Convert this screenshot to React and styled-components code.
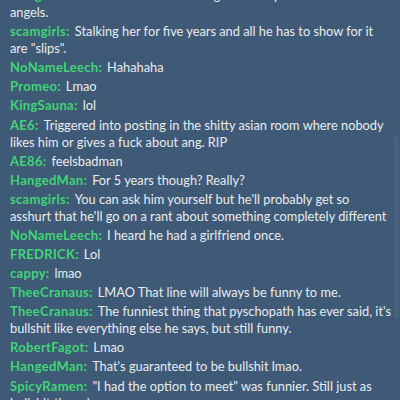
import React from "react";
import styled, { createGlobalStyle } from "styled-components";

const Global = createGlobalStyle`
  html, body {
    margin: 0;
    padding: 0;
    background: #3f5a77;
  }
`;

const ChatWindow = styled.div`
  position: relative;
  width: 400px;
  height: 400px;
  overflow: hidden;
  background-color: #3f5a77;
  font-family: Lato, "Noto Sans", sans-serif;
  font-size: 12.8px;
`;

const Feed = styled.div`
  display: flex;
  flex-direction: column;
  margin-top: -14px;
  padding: 0 5px 0 10px;
`;

const Line = styled.div`
  line-height: 17px;
  padding: 1.05px 0;
  color: #e9ecee;
`;

const Name = styled.span`
  font-weight: 700;
  font-size: 13px;
  letter-spacing: 0.3px;
  color: #40d475;
  margin-right: 5px;
`;

const Thumb = styled.div`
  position: absolute;
  right: 1px;
  top: 137px;
  width: 5px;
  height: 181px;
  background: rgba(255, 255, 255, 0.05);
`;

// \u00a0 keeps a few word pairs together so lines wrap where the original chat did
const messages = [
  ["HangedMan", "He thinks she's waiting for him up there with the angels."],
  ["scamgirls", 'Stalking her for five years and all he has to show for it are\u00a0"slips".'],
  ["NoNameLeech", "Hahahaha"],
  ["Promeo", "Lmao"],
  ["KingSauna", "lol"],
  ["AE6", "Triggered into posting in the shitty asian room where nobody likes him or gives a fuck about ang. RIP"],
  ["AE86", "feelsbadman"],
  ["HangedMan", "For 5 years though? Really?"],
  ["scamgirls", "You can ask him yourself but he'll probably get so asshurt\u00a0that he'll go on a rant about something completely different"],
  ["NoNameLeech", "I heard he had a girlfriend once."],
  ["FREDRICK", "Lol"],
  ["cappy", "lmao"],
  ["TheeCranaus", "LMAO That line will always be funny to me."],
  ["TheeCranaus", "The funniest thing that pyschopath has ever said, it's bullshit like everything else he says, but still funny."],
  ["RobertFagot", "Lmao"],
  ["HangedMan", "That's guaranteed to be bullshit lmao."],
  ["SpicyRamen", '"I had the option to meet" was funnier. Still just as bullshit though.'],
];

export default function App() {
  return (
    <ChatWindow>
      <Global />
      <Feed>
        {messages.map(([user, text], i) => (
          <Line key={i}>
            <Name>{user}:</Name>
            {text}
          </Line>
        ))}
      </Feed>
      <Thumb />
    </ChatWindow>
  );
}
